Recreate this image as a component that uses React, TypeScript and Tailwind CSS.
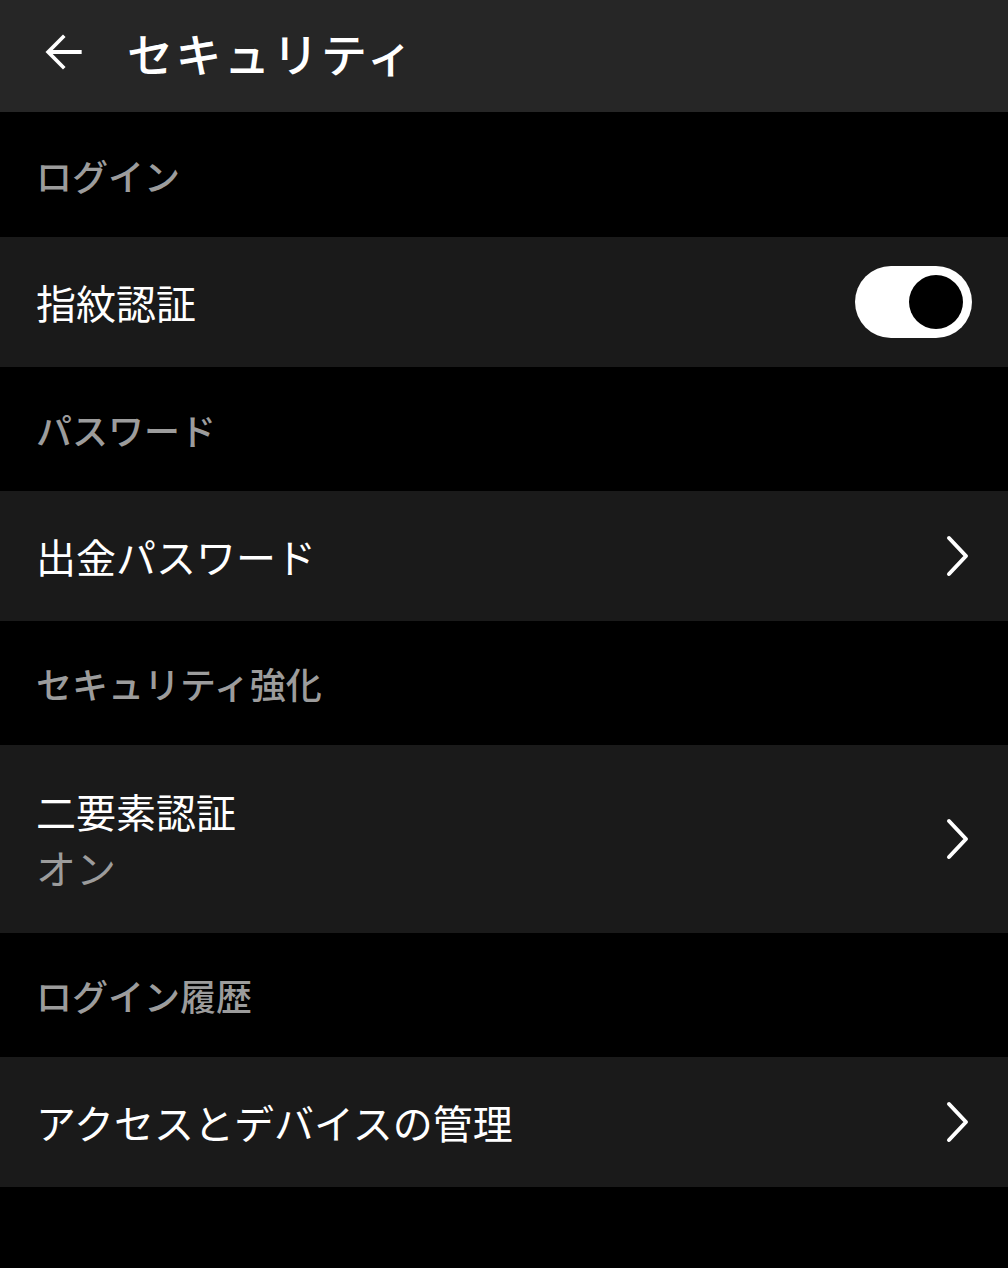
import React from "react";

const font = { fontFamily: '"Noto Sans CJK JP", "Noto Sans", sans-serif' };

function Chevron() {
  return (
    <svg width="30" height="44" viewBox="0 0 30 44" fill="none" className="shrink-0">
      <polyline points="7,4 24,22 7,40" stroke="white" strokeWidth="4" strokeLinecap="round" strokeLinejoin="round" />
    </svg>
  );
}

function SectionLabel({ text, h = "h-[124px]" }: { text: string; h?: string }) {
  return (
    <div className={`${h} bg-black flex items-center px-[36px]`}>
      <span className="text-[36px] text-[#9c9c9c] font-medium leading-none">{text}</span>
    </div>
  );
}

export default function App() {
  return (
    <div className="w-[1008px] h-[1268px] bg-black text-white" style={font}>
      <header className="h-[112px] bg-[#262626] flex items-center pb-[8px]">
        <svg width="56" height="56" viewBox="0 0 24 24" className="ml-[35px]" fill="white">
          <path d="M20 11.1H7.6l5.5-5.5L12 4.5l-7.5 7.5 7.5 7.5 1.1-1.1-5.5-5.5H20v-1.8z" />
        </svg>
        <h1 className="ml-[36px] text-[46px] font-medium leading-none tracking-[2.5px]">セキュリティ</h1>
      </header>

      <SectionLabel text="ログイン" h="h-[125px]" />
      <div className="h-[130px] bg-[#1a1a1a] flex items-center justify-between pl-[36px] pr-[36px]">
        <span className="text-[40px] leading-none">指紋認証</span>
        <div className="w-[117px] h-[72px] rounded-full bg-white flex items-center justify-end pr-[9px]">
          <div className="w-[54px] h-[54px] rounded-full bg-black" />
        </div>
      </div>

      <SectionLabel text="パスワード" />
      <div className="h-[130px] bg-[#1a1a1a] flex items-center justify-between pl-[36px] pr-[36px]">
        <span className="text-[40px] leading-none">出金パスワード</span>
        <Chevron />
      </div>

      <SectionLabel text="セキュリティ強化" />
      <div className="h-[188px] bg-[#1a1a1a] flex items-center justify-between pl-[36px] pr-[36px]">
        <div className="flex flex-col gap-[16px]">
          <span className="text-[40px] leading-none">二要素認証</span>
          <span className="text-[40px] leading-none text-[#9c9c9c]">オン</span>
        </div>
        <Chevron />
      </div>

      <SectionLabel text="ログイン履歴" />
      <div className="h-[130px] bg-[#1a1a1a] flex items-center justify-between pl-[36px] pr-[36px]">
        <span className="text-[40px] leading-none">アクセスとデバイスの管理</span>
        <Chevron />
      </div>
    </div>
  );
}
